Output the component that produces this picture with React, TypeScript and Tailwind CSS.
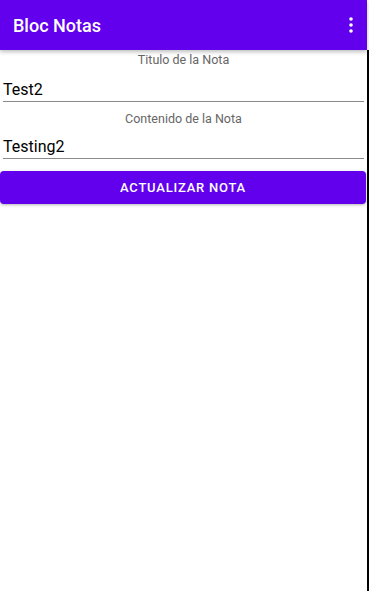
export default function App() {
  return (
    <div className="flex h-[591px] w-[369px] overflow-hidden bg-white font-['Roboto',sans-serif]">
      <div className="flex flex-1 flex-col">
        <header className="relative z-10 flex h-[50px] items-center justify-between bg-[#6200ee] pl-[13px] pr-[14px] shadow-[0_2px_4px_rgba(0,0,0,0.25)]">
          <h1 className="text-[18px] font-medium text-white">Bloc Notas</h1>
          <svg width="4" height="16" viewBox="0 0 4 16" fill="white">
            <circle cx="2" cy="2" r="1.8" />
            <circle cx="2" cy="8" r="1.8" />
            <circle cx="2" cy="14" r="1.8" />
          </svg>
        </header>
        <main className="flex flex-col">
          <p className="mt-[2px] text-center text-[12.5px] leading-[16px] text-[#666666]">Titulo de la Nota</p>
          <div className="mx-[3px] mt-[12px] border-b border-[#8a8a8a] pb-[1px] text-[16px] leading-[20px] text-black">Test2</div>
          <p className="mt-[9px] text-center text-[12.5px] leading-[16px] text-[#666666]">Contenido de la Nota</p>
          <div className="mx-[3px] mt-[10px] border-b border-[#8a8a8a] pb-[1px] text-[16px] leading-[20px] text-black">Testing2</div>
          <button className="mt-[12px] mr-[1px] flex h-[33px] items-center justify-center rounded-[4px] bg-[#6200ee] text-[13px] font-medium tracking-[0.06em] text-white shadow-[0_1px_3px_rgba(0,0,0,0.3)]">
            ACTUALIZAR NOTA
          </button>
        </main>
      </div>
      <div className="mt-[50px] w-[2px] bg-black" />
    </div>
  );
}
